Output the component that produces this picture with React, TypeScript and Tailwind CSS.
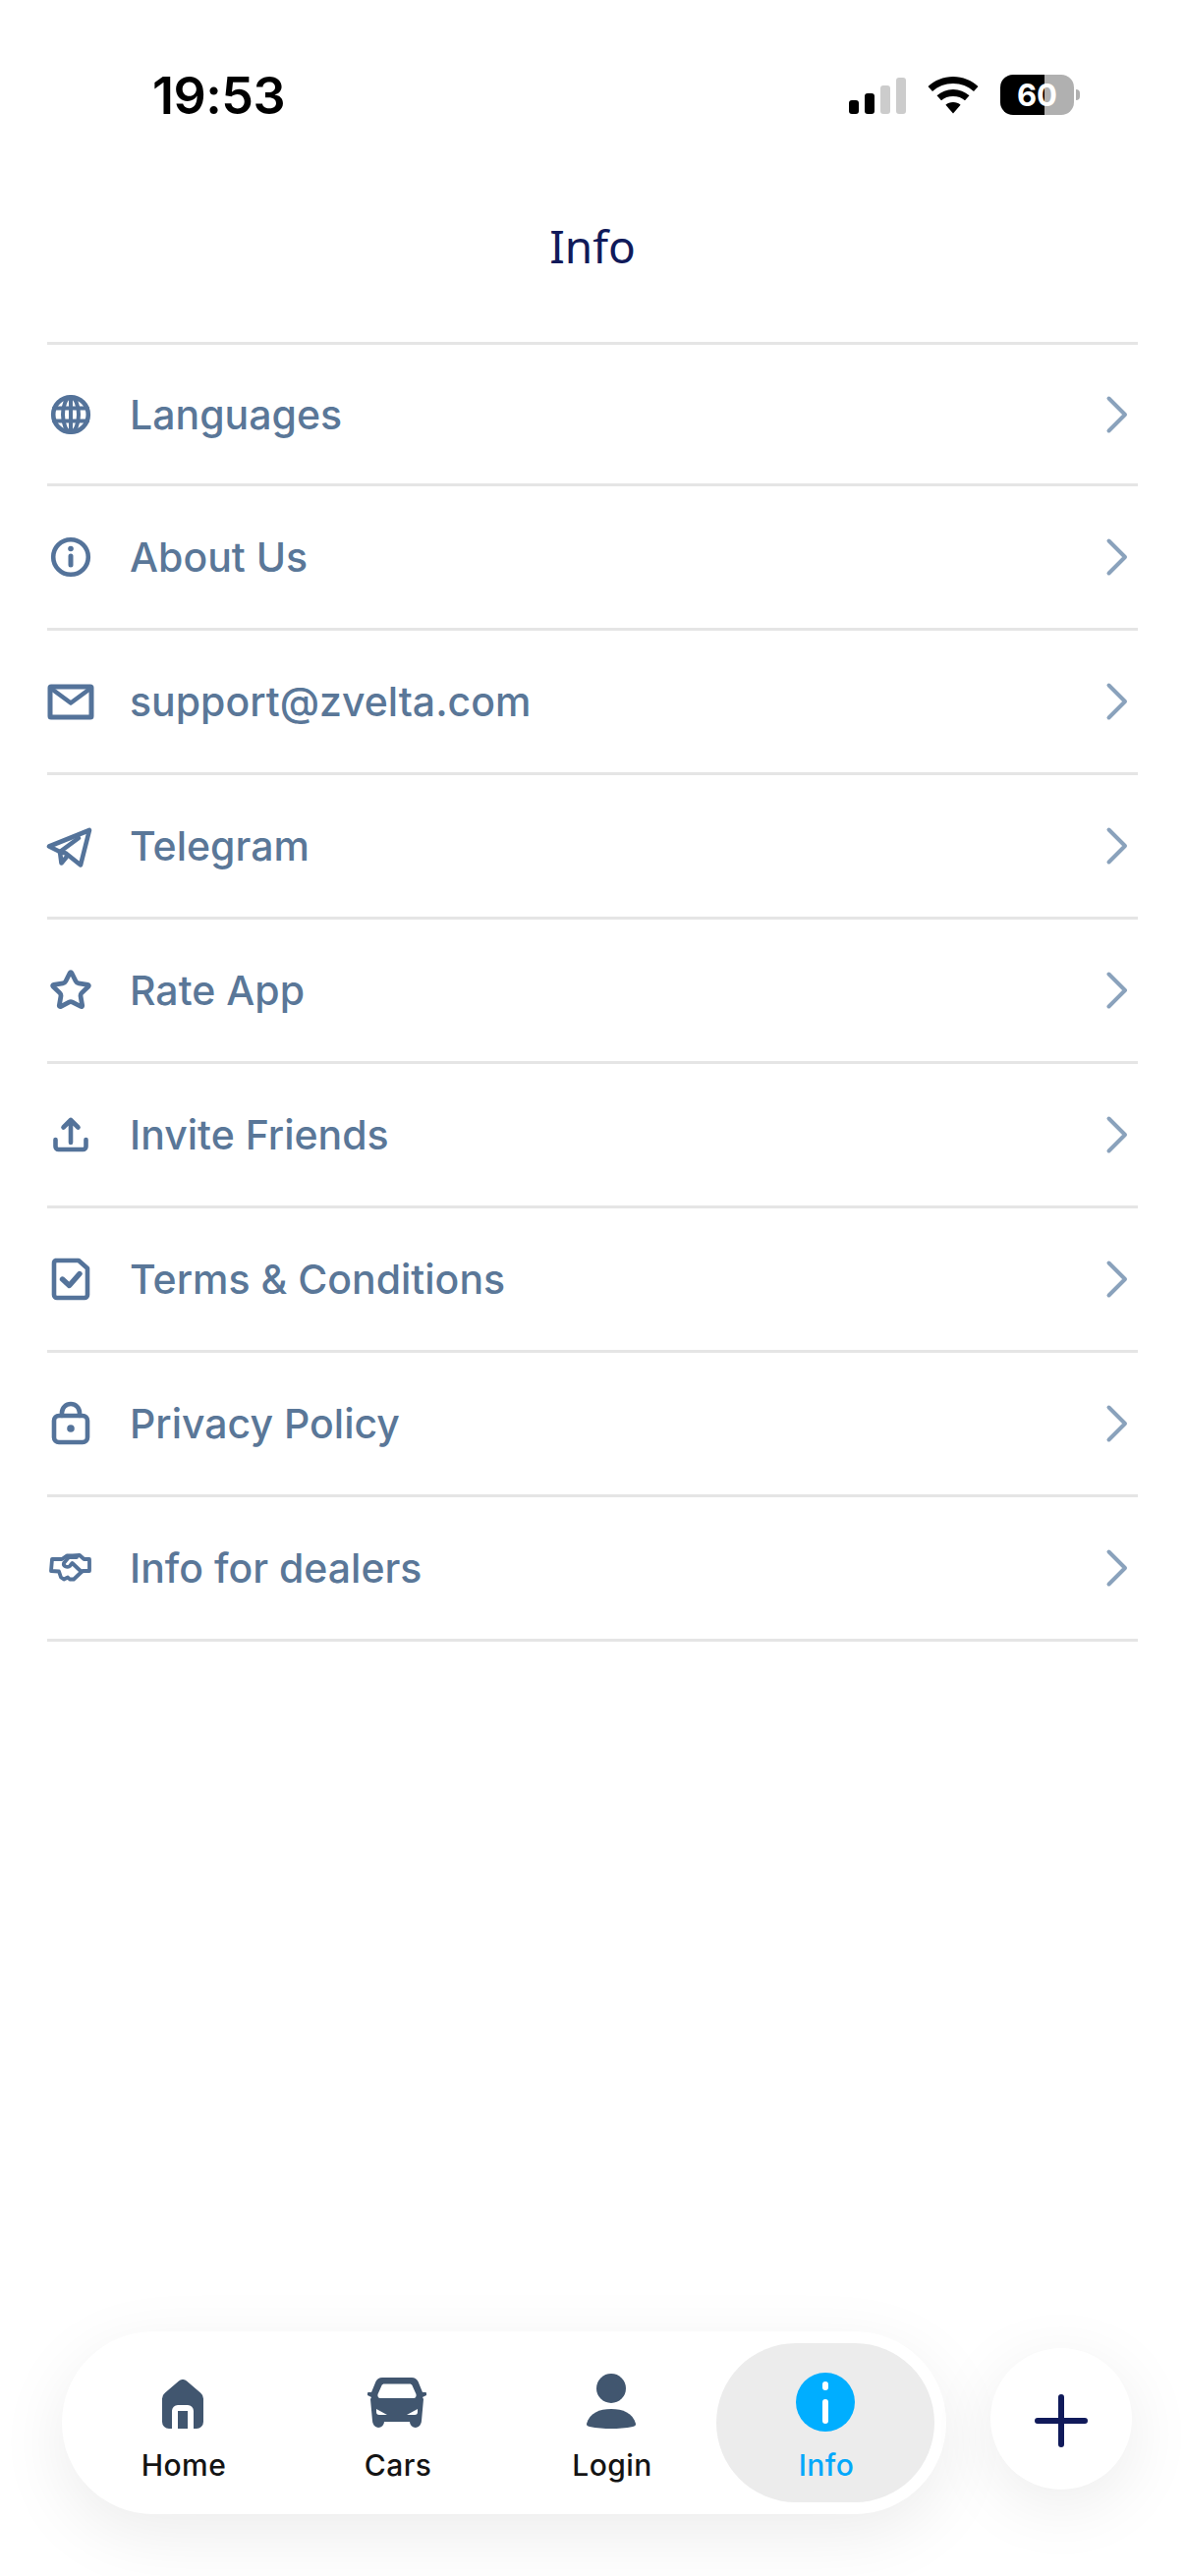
import { Star } from "lucide-react";
import type { ReactNode } from "react";

const S = ({ children }: { children: ReactNode }) => (
  <svg width="50" height="50" viewBox="0 0 50 50" fill="none" stroke="#54739a" strokeWidth="4.600" strokeLinecap="round" strokeLinejoin="round">
    {children}
  </svg>
);

const rows: { label: string; icon: ReactNode }[] = [
  {
    label: "Languages",
    icon: (
      <S>
        <circle cx="25" cy="25" r="17.800" />
        <ellipse cx="25" cy="25" rx="8" ry="17.800" strokeWidth="4" />
        <path d="M8 18.500h34M8 31.500h34M25 7v36" strokeWidth="4" />
      </S>
    ),
  },
  {
    label: "About Us",
    icon: (
      <S>
        <circle cx="25" cy="25" r="17.800" />
        <path d="M25 24v9" strokeWidth="5" />
        <circle cx="25" cy="16.500" r="2.800" fill="#54739a" stroke="none" />
      </S>
    ),
  },
  {
    label: "support@zvelta.com",
    icon: (
      <S>
        <rect x="4" y="10" width="42" height="31" rx="1" strokeWidth="5" />
        <path d="M6 12.500l19 14 19-14" />
      </S>
    ),
  },
  {
    label: "Telegram",
    icon: (
      <svg width="50" height="50" viewBox="17 5 50 50" fill="none" stroke="#54739a" strokeWidth="4.600" strokeLinecap="round" strokeLinejoin="round">
        <path d="M20 30.500L61 14l-9 35.500-15-12L31 36z" />
        <path d="M31 36l1.500 11.500 5-6M31 36l19-14" />
      </svg>
    ),
  },
  { label: "Rate App", icon: <Star size={44} color="#54739a" strokeWidth={2.6} /> },
  {
    label: "Invite Friends",
    icon: (
      <S>
        <path d="M9.500 30v7a3 3 0 0 0 3 3h25a3 3 0 0 0 3-3v-7" />
        <path d="M25 33V11M17.500 17.500l7.500-7.500 7.500 7.500" />
      </S>
    ),
  },
  {
    label: "Terms & Conditions",
    icon: (
      <S>
        <path d="M10 6h23l9 8v27a3 3 0 0 1-3 3H11a3 3 0 0 1-3-3V9a3 3 0 0 1 2-3z" />
        <path d="M16.500 25l7 6.500L34 19.500" strokeWidth="5.400" />
      </S>
    ),
  },
  {
    label: "Privacy Policy",
    icon: (
      <S>
        <rect x="8" y="17" width="34" height="27" rx="5" />
        <path d="M16 17v-3a9 9 0 0 1 18 0v3" />
        <circle cx="25" cy="30" r="3.800" fill="#54739a" stroke="none" />
      </S>
    ),
  },
  {
    label: "Info for dealers",
    icon: (
      <svg width="50" height="50" viewBox="6 8 50 50" fill="none" stroke="#54739a" strokeWidth="3.800" strokeLinecap="round" strokeLinejoin="round">
        <path d="M12 24h10l5-3.500h6l7-.5 4.500 4H50v12h-7l-9 8.500h-4l-2-2-4 2-3-2-2-6-8-.5z" />
        <path d="M37 22h-8l-5 6c-1 3 3 5 6 3l2.500-3L42 37" />
      </svg>
    ),
  },
];

function Wifi() {
  return (
    <svg width="52" height="38" viewBox="0 0 52 38" fill="#000">
      <path d="M26 0c10 0 18.600 3.800 25.500 10l-4.500 5C41.100 9.800 34.300 7 26 7S10.900 9.800 5 15L.5 10C7.400 3.800 16 0 26 0z" />
      <path d="M26 13c6.400 0 12 2.300 16.500 6.300l-4.500 5C35 21.500 30.700 20 26 20s-9 1.500-12 4.300l-4.500-5C14 15.300 19.600 13 26 13z" />
      <path d="M26 26c3 0 5.600 1 7.600 2.800L26 37.500l-7.600-8.700C20.400 27 23 26 26 26z" />
    </svg>
  );
}

function Tab({ label, active, children }: { label: string; active?: boolean; children: ReactNode }) {
  return (
    <div
      className={
        active
          ? "-mx-[2px] flex h-[162px] w-[222px] flex-col items-center rounded-[81px] bg-[#ececec] pt-[30px]"
          : "flex h-[162px] w-[218px] flex-col items-center pt-[30px]"
      }
    >
      <div className={active ? "flex h-[60px] items-end justify-center" : "flex h-[60px] items-end justify-center pb-[3px]"}>{children}</div>
      <span
        className={
          active
            ? "mt-[14px] translate-x-[1px] text-[30px] leading-[40px] font-[450] tracking-[0.4px] text-[#02a8fb]"
            : "mt-[14px] translate-x-[1px] text-[30px] leading-[40px] font-[450] tracking-[0.4px] text-[#141414]"
        }
      >
        {label}
      </span>
    </div>
  );
}

export default function App() {
  return (
    <div className="flex h-[2622px] w-[1206px] flex-col overflow-hidden bg-white font-['Inter',sans-serif]">
      <div className="flex h-[196px] items-start justify-between pt-[66px] pr-[107px] pl-[155px]">
        <span className="text-[52px] leading-[64px] font-semibold tracking-[-0.5px] text-black">19:53</span>
        <div className="flex items-center pt-[10px]">
          <div className="flex h-[38px] items-end gap-[6px]">
            <div className="h-[14px] w-[10px] rounded-[3px] bg-black" />
            <div className="h-[21px] w-[10px] rounded-[3px] bg-black" />
            <div className="h-[29px] w-[10px] rounded-[3px] bg-[#cccccc]" />
            <div className="h-[37px] w-[10px] rounded-[3px] bg-[#cccccc]" />
          </div>
          <div className="ml-[22px]">
            <Wifi />
          </div>
          <div className="ml-[22px] flex h-[41px] w-[75px] items-center justify-center rounded-[13px] bg-[linear-gradient(90deg,#000_60%,#b0b0b0_60%)] text-[31px] leading-none font-bold text-white">
            60
          </div>
          <div className="ml-[2px] h-[11px] w-[4px] rounded-r-full bg-[#b0b0b0]" />
        </div>
      </div>
      <div className="flex h-[110px] items-start justify-center">
        <span className="font-['Noto_Sans',sans-serif] text-[46px] leading-[110px] text-[#101a5a] -mt-[1px]">Info</span>
      </div>
      <div className="mx-[48px] h-[42px]" />
      <div className="mx-[48px] border-t-[3px] border-[#e5e5e5]">
        {rows.map((r, i) => (
          <div
            key={r.label}
            className={
              i === 0
                ? "flex h-[144px] items-center border-b-[3px] border-[#e5e5e5]"
                : "flex h-[147px] items-center border-b-[3px] border-[#e5e5e5]"
            }
          >
            <div className="flex w-[50px] -translate-x-[1px] items-center justify-center">{r.icon}</div>
            <span className="ml-[34px] flex-1 text-[41px] leading-[50px] font-medium text-[#5a7798]">{r.label}</span>
            <svg width="24" height="40" viewBox="0 0 24 40" fill="none" stroke="#8aa2bc" strokeWidth="4" strokeLinecap="round" strokeLinejoin="round" className="mr-[9px]">
              <path d="M3.500 3.500L20 20 3.500 36.500" />
            </svg>
          </div>
        ))}
      </div>
      <div className="flex-1" />
      <div className="flex items-start pb-[63px] pl-[63px]">
        <div className="flex h-[186px] w-[900px] items-center rounded-[93px] bg-white pl-[14px] shadow-[0_20px_70px_rgba(0,0,0,0.08)]">
          <Tab label="Home">
            <svg width="42" height="50" viewBox="0 0 42 50" fill="#41566f">
              <path d="M17 1.500a6 6 0 0 1 8 0L39 13.500a8 8 0 0 1 3 6V43a7 7 0 0 1-7 7h-3V32a6 6 0 0 0-6-6h-10a6 6 0 0 0-6 6v18H7a7 7 0 0 1-7-7V19.500a8 8 0 0 1 3-6z" />
              <rect x="16" y="32" width="10" height="18" />
            </svg>
          </Tab>
          <Tab label="Cars">
            <svg width="60" height="52" viewBox="0 0 60 52" fill="#41566f" fillRule="evenodd">
              <path d="M15 0h30c3 0 5 1.500 6.500 4L56 15h3a1 1 0 0 1 1 1v2l-4 2 1 2-2 22a7 7 0 0 1-6 7 6 6 0 0 1-6-6H17a6 6 0 0 1-6 6 7 7 0 0 1-6-7L3 22l1-2-4-2v-2a1 1 0 0 1 1-1h3L8.500 4C10 1.500 12 0 15 0zM17 6.500c-1 0-2 .5-2.500 1.500L10.500 17c-.5 2 .5 4 2.500 4h34c2 0 3-2 2.500-4L45.500 8c-.5-1-1.500-1.500-2.500-1.500zM9 32v3a3 3 0 0 0 3 3h8zM51 32l-11 6h8a3 3 0 0 0 3-3z" />
            </svg>
          </Tab>
          <Tab label="Login">
            <svg width="52" height="56" viewBox="0 0 52 56" fill="#41566f">
              <circle cx="26" cy="15" r="15" />
              <path d="M1 51C4 40 14 36 26 36s22 4 25 15c.3 1.500-1 2.500-3 3-7 1.500-15 2-22 2s-15-.5-22-2c-2-.5-3.300-1.500-3-3z" />
            </svg>
          </Tab>
          <Tab label="Info" active>
            <svg width="60" height="60" viewBox="0 0 60 60">
              <circle cx="30" cy="30" r="30" fill="#00aeff" />
              <rect x="27" y="9" width="6" height="9" rx="3" fill="#fff" />
              <rect x="27" y="27" width="6" height="25" rx="3" fill="#fff" />
            </svg>
          </Tab>
        </div>
        <div className="mt-[17px] ml-[45px] flex h-[144px] w-[144px] items-center justify-center rounded-full bg-white shadow-[0_16px_70px_rgba(0,0,0,0.08)]">
          <svg width="54" height="54" viewBox="0 0 54 54" fill="none" stroke="#101a5a" strokeWidth="6" strokeLinecap="round" className="mt-[3px]">
            <path d="M27 3v48M3 27h48" />
          </svg>
        </div>
      </div>
    </div>
  );
}
